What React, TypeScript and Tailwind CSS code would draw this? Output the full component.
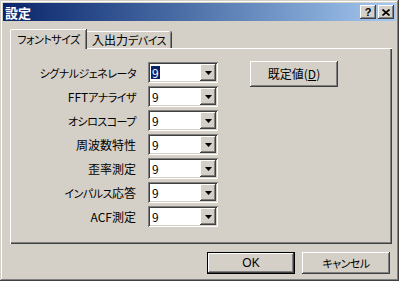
import React from 'react';

const font = { fontFamily: '"Noto Sans CJK JP", "Liberation Sans", sans-serif' };

const raised = 'shadow-[inset_-1px_-1px_#404040,inset_1px_1px_#ffffff,inset_-2px_-2px_#808080,inset_2px_2px_#d4d0c8]';
const sunken = 'shadow-[inset_1px_1px_#808080,inset_-1px_-1px_#ffffff,inset_2px_2px_#404040,inset_-2px_-2px_#d4d0c8]';

const rows = ['シグナルジェネレータ', 'FFTアナライザ', 'オシロスコープ', '周波数特性', '歪率測定', 'インパルス応答', 'ACF測定'];

// katakana runs are narrower in the old UI font, so shrink them a little
function J({ t }: { t: string }) {
  const parts = t.match(/[\u30A0-\u30FF]+|[^\u30A0-\u30FF]+/g) || [];
  return (
    <>
      {parts.map((p, i) =>
        /[\u30A0-\u30FF]/.test(p) ? (
          <span key={i} className="text-[11px] tracking-[-0.5px]">{p}</span>
        ) : (
          <span key={i}>{p}</span>
        )
      )}
    </>
  );
}

function Combo({ sel }: { sel?: boolean }) {
  return (
    <div className={`w-[70px] h-[21px] bg-white flex items-center p-[2px] ${sunken}`}>
      <div className="flex-1 h-full flex items-center pl-[1px]">
        <span className={`px-[1px] leading-[13px] text-[12px] ${sel ? 'bg-[#0a246a] text-white' : 'text-black'}`}>9</span>
      </div>
      <div className={`w-[16px] h-full bg-[#d4d0c8] flex items-center justify-center ${raised}`}>
        <svg width="7" height="4" viewBox="0 0 7 4"><path d="M0 0h7L3.5 4z" fill="#000" /></svg>
      </div>
    </div>
  );
}

export default function App() {
  return (
    <div
      style={font}
      className="w-[399px] h-[281px] bg-[#d4d0c8] flex flex-col p-[3px] text-[12px] [font-feature-settings:'palt'] text-black shadow-[inset_-1px_-1px_#404040,inset_1px_1px_#d4d0c8,inset_-2px_-2px_#808080,inset_2px_2px_#ffffff] overflow-hidden"
    >
      <div className="h-[18px] bg-gradient-to-r from-[#0a246a] to-[#a6caf0] flex items-center pl-[2px] pr-[2px]">
        <span className="flex-1 text-white font-bold text-[13px] leading-none">設定</span>
        <div className="flex gap-[2px]">
          <div className={`w-[16px] h-[14px] bg-[#d4d0c8] flex items-center justify-center font-bold text-[11px] leading-none ${raised}`} style={{ fontFamily: '"Liberation Sans", sans-serif' }}>?</div>
          <div className={`w-[16px] h-[14px] bg-[#d4d0c8] flex items-center justify-center ${raised}`}>
            <svg width="8" height="7" viewBox="0 0 8 7"><path d="M0.5 0.5L7.5 6.5M7.5 0.5L0.5 6.5" stroke="#000" strokeWidth="1.6" /></svg>
          </div>
        </div>
      </div>

      <div className="pl-[7px] pt-[8px]">
        <div className="flex items-end h-[19px] relative z-10">
          <div className="w-[76px] h-[20px] mb-[-1px] flex items-center justify-center whitespace-nowrap bg-[#d4d0c8] border-l border-t border-white rounded-tl-[2px] shadow-[inset_-1px_0_#808080,1px_0_#404040]">
            <J t="フォントサイズ" />
          </div>
          <div className="w-[84px] h-[17px] ml-[1px] flex items-center justify-center whitespace-nowrap bg-[#d4d0c8] border-t border-white rounded-tr-[2px] shadow-[inset_-1px_0_#808080,1px_0_#404040]">
            <J t="入出力デバイス" />
          </div>
        </div>
        <div className="w-[382px] h-[196px] flex pt-[14px] pl-[1px] shadow-[inset_1px_1px_#ffffff,inset_-1px_-1px_#404040,inset_-2px_-2px_#808080]">
          <div className="flex flex-col gap-[3px]">
            {rows.map((r, i) => (
              <div key={r} className="flex items-center gap-[12px]">
                <div className="w-[125px] text-right leading-none whitespace-nowrap"><J t={r} /></div>
                <Combo sel={i === 0} />
              </div>
            ))}
          </div>
          <div className={`ml-[32px] mt-[-1px] w-[88px] h-[26px] flex items-center justify-center ${raised}`}>
            既定値(<span className="underline">D</span>)
          </div>
        </div>
      </div>

      <div className="flex justify-end gap-[7px] pr-[6px] pt-[8px]">
        <div className="w-[88px] h-[22px] flex items-center justify-center shadow-[inset_0_0_0_1px_#000000,inset_-2px_-2px_#404040,inset_2px_2px_#ffffff,inset_-3px_-3px_#808080]" style={{ fontFamily: '"Liberation Sans", sans-serif' }}>
          OK
        </div>
        <div className={`w-[88px] h-[22px] flex items-center justify-center ${raised}`}><J t="キャンセル" /></div>
      </div>
    </div>
  );
}
